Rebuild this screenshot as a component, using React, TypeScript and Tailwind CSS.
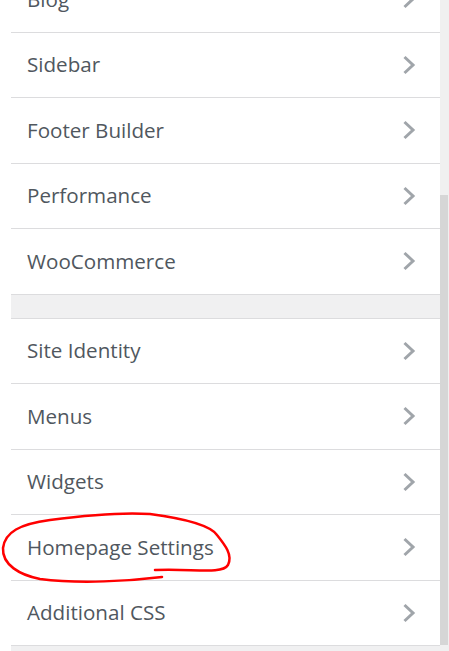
import React from "react";

const Chevron = () => (
  <svg width="14" height="20" viewBox="0 0 14 20" className="shrink-0">
    <polyline points="2.5,2 11,10 2.5,18" fill="none" stroke="#a0a5aa" strokeWidth="3" strokeLinecap="butt" strokeLinejoin="miter" />
  </svg>
);

const Row = ({ label }: { label: string }) => (
  <div className="h-[65.5px] border-b border-[#dcdcde] bg-white flex items-center justify-between pl-4 pr-[24px]">
    <span className="text-[20.6px] text-[#50575e]" style={{ fontFamily: "'Open Sans', 'Noto Sans', sans-serif" }}>{label}</span>
    <Chevron />
  </div>
);

export default function App() {
  const first = ["Blog", "Sidebar", "Footer Builder", "Performance", "WooCommerce"];
  const second = ["Site Identity", "Menus", "Widgets", "Homepage Settings", "Additional CSS"];
  return (
    <div className="relative w-[449px] h-[651px] overflow-hidden bg-white flex">
      <div className="w-[11px] shrink-0 bg-white" />
      <div className="w-[429px] shrink-0 bg-[#f0f0f1]">
        <div className="-mt-[33px]">
          {first.map((l) => (
            <Row key={l} label={l} />
          ))}
          <div className="h-[23px] bg-[#f0f0f1]" />
          <div className="border-t border-[#dcdcde]">
            {second.map((l) => (
              <Row key={l} label={l} />
            ))}
          </div>
        </div>
      </div>
      <div className="w-[9px] shrink-0 bg-[#f0f0f0] flex flex-col">
        <div className="h-[195px]" />
        <div className="flex-1 bg-[#d6d6d6] mr-[1px] mb-[6px]" />
      </div>
      <svg className="absolute left-0 top-0 pointer-events-none" width="449" height="651">
        <path
          d="M155 570 C 190 568, 222 575, 228 565 C 233 555, 225 545, 217 535 C 210 525, 180 518, 150 514 C 120 512, 80 516, 50 520 C 20 524, 5 532, 3 548 C 2 565, 20 575, 40 579 C 80 584, 130 581, 162 577"
          fill="none"
          stroke="#ff0000"
          strokeWidth="2.5"
          strokeLinecap="round"
          strokeLinejoin="round"
        />
      </svg>
    </div>
  );
}
